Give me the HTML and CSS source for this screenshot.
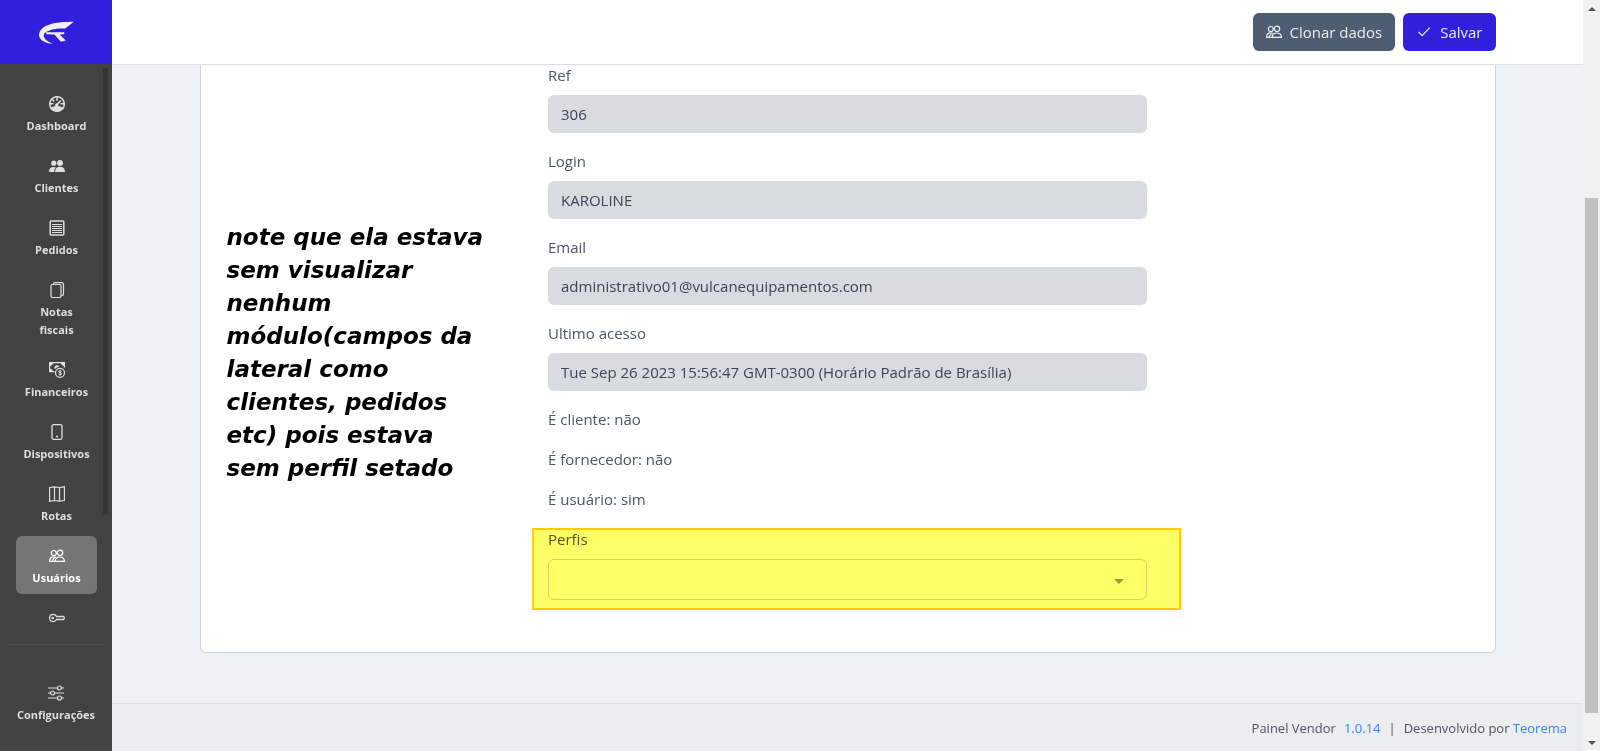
FILE: index.html
```html
<!DOCTYPE html>
<html lang="pt-BR">
<head>
  <meta charset="UTF-8">
  <meta name="viewport" content="width=device-width, initial-scale=1.0">
  <title>Painel Vendor</title>
  <link rel="stylesheet" href="styles.css">
</head>
<body>
  <svg class="sprite" aria-hidden="true">
    <symbol id="icon-users" viewBox="0 0 16 16">
      <g fill="none" stroke="currentColor" stroke-width="1.2">
        <circle cx="4.8" cy="5" r="2.5"/>
        <circle cx="11" cy="4.800" r="2.700"/>
        <path d="M6.200 13.400c0-2.800 1.900-4.400 4.600-4.400s4.600 1.600 4.600 4.400z"/>
        <path d="M6.200 13.400H.6c0-2.900 1.500-4.500 4-4.500.9 0 1.700.2 2.400.6M3.400 13.200c.2-1.300.9-2.300 2-2.900"/>
      </g>
    </symbol>
  </svg>

  <div class="layout">
    <aside class="sidebar">
      <a href="#" class="logo" aria-label="Início">
        <svg width="37" height="23" viewBox="114 62 111 70" fill="#f1f1f1">
          <path d="M222 64L196 85C172 83 148 88 135 97C124 107 134 124 159 131C131 130 112 116 117 99C124 72 165 64 222 64Z"/>
          <path d="M136 96H193V102L179 103L198 121L183 125L163 103L140 102Z"/>
        </svg>
      </a>

      <nav class="menu">
        <a href="#" class="menu-item">
          <svg class="icon" viewBox="0 0 16 16">
            <circle cx="8" cy="8" r="7.300" fill="none" stroke="currentColor" stroke-width="1.500"/>
            <path fill="currentColor" d="M1.500 12C3.500 10.500 5.500 10 8 10s4.500.5 6.500 2C13.300 14.200 11 15.600 8 15.600S2.700 14.200 1.500 12z"/>
            <path fill="none" stroke="currentColor" stroke-width="1.500" d="M7.400 9.600l4.300-5.200M8 1.500v3.200M3.200 3.400l2 2M1 7.800h3.400M11.600 7.800H15"/>
            <circle cx="7.700" cy="9" r="1.700" fill="currentColor"/>
          </svg>
          <span>Dashboard</span>
        </a>
        <a href="#" class="menu-item">
          <svg class="icon" viewBox="0 0 16 16" fill="currentColor">
            <circle cx="4.800" cy="5.200" r="2.600"/>
            <circle cx="11" cy="4.900" r="3"/>
            <path d="M6 14c0-3.400 1.900-5.200 5-5.200s5 1.800 5 5.200z"/>
            <path d="M5.200 14H0c0-3.200 1.500-5 4.400-5 1 0 1.800.2 2.500.6C5.700 10.700 5.200 12.200 5.200 14z"/>
          </svg>
          <span>Clientes</span>
        </a>
        <a href="#" class="menu-item">
          <svg class="icon" viewBox="0 0 16 16" fill="none" stroke="currentColor">
            <rect x="1.200" y="1" width="13.600" height="14" rx="1" stroke-width="1.500"/>
            <path d="M3 4.500h10M3 6.500h10M3 8.500h10M3 10.500h10M3 12.500h10"/>
          </svg>
          <span>Pedidos</span>
        </a>
        <a href="#" class="menu-item">
          <svg class="icon" viewBox="0 0 16 16" fill="none" stroke="currentColor" stroke-width="1.200">
            <rect x="2" y="2.500" width="10" height="13" rx="1.500"/>
            <path d="M4.500 2.300C4.500 1.200 5 .7 6 .7h6.500c1.200 0 2 .8 2 2V12c0 1-.6 1.600-2.300 1.700"/>
          </svg>
          <span>Notas fiscais</span>
        </a>
        <a href="#" class="menu-item">
          <svg class="icon" viewBox="0 0 16 16" fill="none" stroke="currentColor">
            <path stroke-width="1.200" d="M5.500 9.600H.6V.7h14.800v4.800"/>
            <path fill="currentColor" stroke="none" d="M.5.5h3.700C4.200 2.500 2.500 4 .5 4zM15.500.5h-3.700c0 2 1.700 3.500 3.700 3.500zM.5 9.800V6.500c2 0 3.300 1.300 3.500 3.300z"/>
            <path fill="currentColor" stroke="none" d="M5.500 6.500C5 4.500 6.300 3.200 8 3.200c1.300 0 2 .6 2.400 1.500C8.500 5 7 5.700 6.200 7z"/>
            <circle cx="11" cy="10.800" r="4.500" stroke-width="1.200"/>
            <path d="M12.600 9.500c-.4-.8-2.900-1-2.900.2 0 1.300 2.900.7 2.900 2.100 0 1.200-2.700 1-3.100.1M11.100 8v5.600"/>
          </svg>
          <span>Financeiros</span>
        </a>
        <a href="#" class="menu-item">
          <svg class="icon" viewBox="0 0 16 16" fill="none" stroke="currentColor">
            <rect x="3" y=".7" width="10" height="14.600" rx="1.500" stroke-width="1.300"/>
            <path d="M7 12.500h2" stroke-width="1.500"/>
          </svg>
          <span>Dispositivos</span>
        </a>
        <a href="#" class="menu-item">
          <svg class="icon" viewBox="0 0 16 16" fill="none" stroke="currentColor" stroke-width="1.200">
            <path d="M.6 1.500l4.900-.7 5 .7 4.900-.7v13.700l-4.900.7-5-.7-4.900.7zM5.500.8v13.700M10.500 1.500v13.700"/>
          </svg>
          <span>Rotas</span>
        </a>
        <a href="#" class="menu-item active">
          <svg class="icon"><use href="#icon-users"/></svg>
          <span>Usuários</span>
        </a>
        <a href="#" class="menu-item" aria-label="Permissões">
          <svg class="icon" viewBox="0 0 16 16" fill="none" stroke="currentColor" stroke-width="1.300">
            <path d="M7.500 6.500C6.800 5 5.700 4.400 4.200 4.400 2 4.400.6 6 .6 8s1.400 3.600 3.600 3.600c1.500 0 2.600-.6 3.300-2.100h7l1-1.500-1-1.500z"/>
            <circle cx="3.700" cy="8" r=".7" fill="currentColor"/>
          </svg>
        </a>
        <div class="menu-scroll"></div>
      </nav>

      <div class="menu-footer">
        <a href="#" class="menu-item">
          <svg class="icon" viewBox="0 0 16 16" fill="none" stroke="currentColor" stroke-width="1.200">
            <path d="M0 3h9.300M13.700 3H16M0 8h2.300M6.700 8H16M0 13h9.300M13.700 13H16"/>
            <circle cx="11.500" cy="3" r="2"/>
            <circle cx="4.500" cy="8" r="2"/>
            <circle cx="11.500" cy="13" r="2"/>
          </svg>
          <span>Configurações</span>
        </a>
      </div>
    </aside>

    <div class="page">
      <header class="topbar">
        <div class="container topbar-actions">
          <button type="button" class="btn btn-secondary">
            <svg class="icon"><use href="#icon-users"/></svg>
            Clonar dados
          </button>
          <button type="submit" form="user-form" class="btn btn-primary">
            <svg class="icon" viewBox="0 0 16 16" fill="none" stroke="currentColor" stroke-width="1.200">
              <path d="M2.500 8l3.700 3.700 7.500-8"/>
            </svg>
            Salvar
          </button>
        </div>
      </header>

      <main class="container content">
        <div class="card">
          <p class="note">note que ela estava<br>sem visualizar<br>nenhum<br>módulo(campos da<br>lateral como<br>clientes, pedidos<br>etc) pois estava<br>sem perfil setado</p>

          <form id="user-form" class="user-form">
            <div class="field">
              <label for="ref">Ref</label>
              <input type="text" id="ref" value="306" disabled>
            </div>
            <div class="field">
              <label for="login">Login</label>
              <input type="text" id="login" value="KAROLINE" disabled>
            </div>
            <div class="field">
              <label for="email">Email</label>
              <input type="email" id="email" value="administrativo01@vulcanequipamentos.com" disabled>
            </div>
            <div class="field">
              <label for="last-access">Ultimo acesso</label>
              <input type="text" id="last-access" value="Tue Sep 26 2023 15:56:47 GMT-0300 (Horário Padrão de Brasília)" disabled>
            </div>
            <p>É cliente: não</p>
            <p>É fornecedor: não</p>
            <p>É usuário: sim</p>
            <div class="field profiles">
              <label for="profiles">Perfis</label>
              <div class="select">
                <select id="profiles">
                  <option value=""></option>
                </select>
              </div>
              <div class="highlight"></div>
            </div>
          </form>
        </div>
      </main>

      <footer class="footer">
        <span>Painel Vendor</span>
        <a href="#">1.0.14</a>
        <span>|</span>
        <span>Desenvolvido por <a href="#">Teorema</a></span>
      </footer>
    </div>

    <div class="scrollbar" aria-hidden="true">
      <div class="arrow arrow-up"></div>
      <div class="track">
        <div class="thumb"></div>
      </div>
      <div class="arrow arrow-down"></div>
    </div>
  </div>
</body>
</html>
```
FILE: styles.css
```css
* {
  box-sizing: border-box;
}
body {
  margin: 0;
  font-family: "Open Sans", "Noto Sans", sans-serif;
  font-size: 15px;
  line-height: 24px;
  color: #4b5563;
  background-color: #eef1f6;
}
a {
  color: #3b82f6;
  text-decoration: none;
}
p {
  margin: 0 0 16px;
}
.sprite {
  position: absolute;
  width: 0;
  height: 0;
}
.icon {
  width: 16px;
  height: 16px;
  flex: none;
}
.layout {
  display: flex;
  height: 100vh;
  overflow: hidden;
}

/* Sidebar */
.sidebar {
  display: flex;
  flex-direction: column;
  width: 112px;
  flex: none;
  background-color: #424242;
}
.logo {
  display: flex;
  align-items: center;
  justify-content: center;
  height: 64px;
  flex: none;
  background-color: #321fdb;
}
.menu {
  position: relative;
  display: flex;
  flex-direction: column;
  gap: 4px;
  flex: 1;
  min-height: 0;
  padding: 20px 15px 0 16px;
  overflow: hidden;
}
.menu-item {
  display: flex;
  flex-direction: column;
  align-items: center;
  gap: 5px;
  flex: none;
  padding: 12px 8px 7px;
  border-radius: 6px;
  font-size: 11px;
  font-weight: 700;
  line-height: 18px;
  text-align: center;
  color: #dedede;
}
.menu-item.active {
  background-color: #757575;
  color: #fff;
}
.menu-scroll {
  position: absolute;
  top: 4px;
  right: 4px;
  width: 5px;
  height: 77%;
  border-radius: 3px;
  background-color: #333;
}
.menu-footer {
  margin: 0 8px;
  padding: 28px 0 20px;
  border-top: 1px solid #4f4f4f;
}

/* Page */
.page {
  display: flex;
  flex-direction: column;
  flex: 1;
  min-width: 0;
}
.container {
  width: 100%;
  max-width: 1320px;
  margin: 0 auto;
  padding: 0 12px;
}
.topbar {
  position: relative;
  z-index: 1;
  flex: none;
  background-color: #fff;
  border-bottom: 1px solid #dcdde0;
}
.topbar-actions {
  display: flex;
  align-items: center;
  justify-content: flex-end;
  gap: 8px;
  height: 64px;
}
.btn {
  display: flex;
  align-items: center;
  gap: 8px;
  height: 38px;
  padding: 0 13px;
  border: none;
  border-radius: 6px;
  font: inherit;
  color: #ebebeb;
  cursor: pointer;
}
.btn-secondary {
  background-color: #4f5d73;
}
.btn-primary {
  background-color: #321fdb;
}
.content {
  flex: 1;
}
.card {
  display: grid;
  grid-template-columns: 1fr 599px 1fr;
  margin-top: -24px;
  padding: 21px 24px 36px;
  border: 1px solid #d0d2d8;
  border-radius: 6px;
  background-color: #fff;
}
.note {
  align-self: start;
  margin: 158px 0 0 2px;
  font-family: "DejaVu Sans", sans-serif;
  font-size: 23px;
  font-style: italic;
  font-weight: 700;
  line-height: 33px;
  white-space: nowrap;
  color: #000;
}
.field {
  margin-bottom: 16px;
}
.field label {
  display: block;
  margin-bottom: 8px;
}
.field input,
.field select {
  display: block;
  width: 100%;
  height: 38px;
  padding: 0 13px;
  border: none;
  border-radius: 6px;
  font: inherit;
  color: #3c4656;
  background-color: #d8dbe0;
}
.field select {
  height: 41px;
  border: 1px solid #d5d7dc;
  background-color: #fff;
  appearance: none;
}
.select {
  position: relative;
}
.select::after {
  content: "";
  position: absolute;
  top: 20px;
  right: 23px;
  border: 5px solid transparent;
  border-top-color: #999;
  border-bottom: none;
}
.profiles {
  position: relative;
}
.highlight {
  position: absolute;
  inset: 1px -34px -10px -16px;
  border: 2px solid #ffcc0a;
  background-color: #ff6;
  mix-blend-mode: multiply;
  pointer-events: none;
}
.footer {
  display: flex;
  align-items: center;
  justify-content: flex-end;
  gap: 8px;
  height: 48px;
  flex: none;
  padding: 0 16px;
  border-top: 1px solid #d8dbe0;
  font-size: 13px;
  background-color: #ebedef;
}

/* Scrollbar */
.scrollbar {
  display: flex;
  flex-direction: column;
  width: 17px;
  flex: none;
  background-color: #f1f1f1;
}
.arrow {
  display: flex;
  align-items: center;
  justify-content: center;
  height: 17px;
}
.arrow::before {
  content: "";
  border: 4px solid transparent;
}
.arrow-up::before {
  border-top: none;
  border-bottom-color: #505050;
}
.arrow-down::before {
  border-bottom: none;
  border-top-color: #505050;
}
.track {
  display: flex;
  flex-direction: column;
  justify-content: flex-end;
  flex: 1;
  padding: 0 2px 21px;
}
.thumb {
  height: 74%;
  background-color: #c1c1c1;
}
```
